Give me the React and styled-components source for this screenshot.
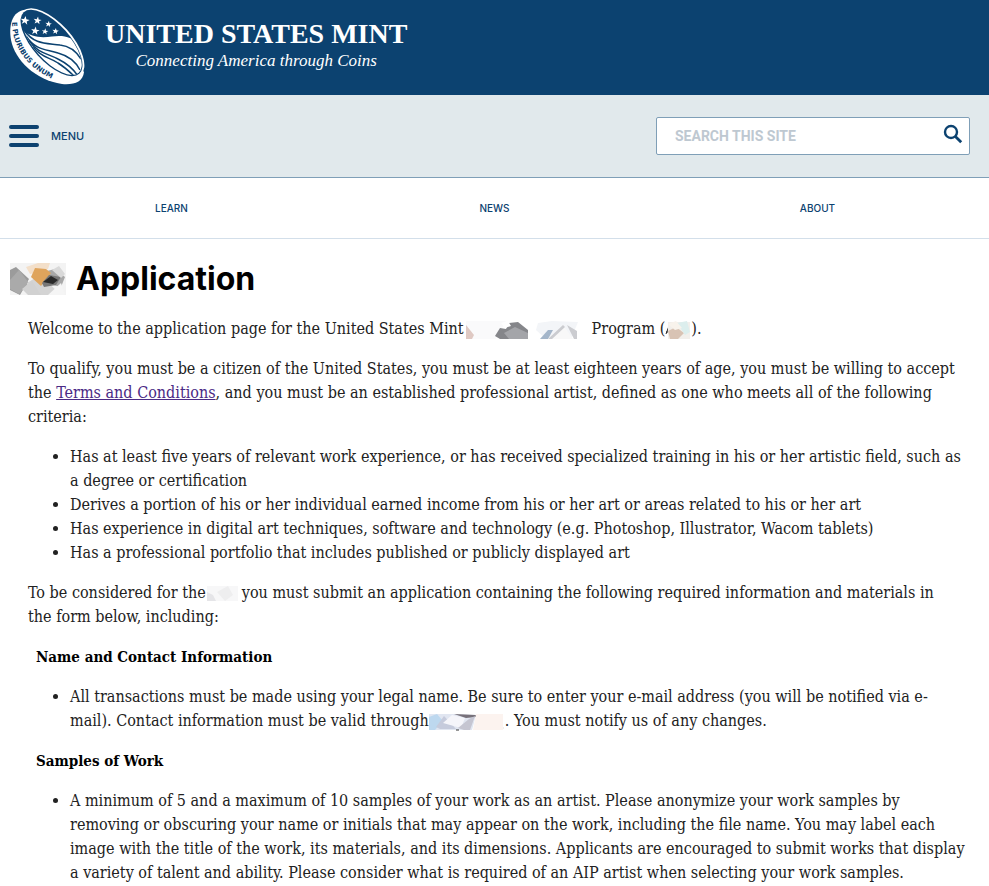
import React from "react";
import styled, { createGlobalStyle } from "styled-components";

const Global = createGlobalStyle`
  * { box-sizing: border-box; }
  body { margin: 0; background: #fff; color: #222; }
`;

const navy = "#0c4270";
const sans = `"Inter", "Open Sans", sans-serif`;
const serif = `"Liberation Serif", serif`;
const slab = `"DejaVu Serif Condensed", "DejaVu Serif", serif`;

const Masthead = styled.header`
  height: 95px;
  padding: 8px 8px 0;
  background: ${navy};
  color: #fff;
`;
const Brand = styled.a`
  display: inline-flex;
  gap: 20px;
  color: inherit;
  text-decoration: none;
`;
const Wordmark = styled.span`
  display: flex;
  flex-direction: column;
  align-items: center;
  padding-top: 10px;
  font-family: ${serif};
  white-space: nowrap;
`;
const BrandName = styled.span`
  font-size: 28px;
  font-weight: 700;
  line-height: 32px;
`;
const Tagline = styled.span`
  font-size: 17px;
  font-style: italic;
  line-height: 22px;
`;
const Toolbar = styled.div`
  display: flex;
  align-items: center;
  justify-content: space-between;
  height: 83px;
  padding: 0 19px 0 9px;
  background: #e1e9ec;
  border-bottom: 1px solid #7f9fb7;
`;
const MenuButton = styled.button`
  display: flex;
  align-items: center;
  gap: 12px;
  padding: 0;
  border: 0;
  background: none;
  color: ${navy};
  font: 500 11px/16px ${sans};
`;
const Search = styled.form`
  display: flex;
  align-items: center;
  width: 314px;
  height: 38px;
  padding: 0 6px 0 18px;
  background: #fff;
  border: 1px solid #7f9fb7;
  border-radius: 2px;
`;
const SearchInput = styled.input`
  flex: 1;
  min-width: 0;
  padding: 0;
  border: 0;
  outline: 0;
  background: none;
  font: 700 14px/18px "Roboto", sans-serif;
  color: ${navy};
  &::placeholder { color: #bec8d1; opacity: 1; }
`;
const SearchButton = styled.button`
  display: flex;
  padding: 0 0 4px;
  border: 0;
  background: none;
`;
const Nav = styled.nav`
  display: grid;
  grid-template-columns: repeat(3, 1fr);
  align-items: center;
  justify-items: center;
  height: 61px;
  padding: 0 10px;
  border-bottom: 1px solid #d3dfea;
`;
const NavLink = styled.a`
  font: 500 10px/16px ${sans};
  color: ${navy};
  text-decoration: none;
`;
const Main = styled.main`
  padding: 20px 10px 0;
`;
const Title = styled.h1`
  display: flex;
  align-items: center;
  gap: 8px;
  margin: 0 0 18px;
  font: 700 32px/40px ${sans};
  color: #000;
`;
const Body = styled.div`
  padding: 0 14px 0 18px;
  font: 16px/24px ${slab};
`;
const Paragraph = styled.p`
  margin: 0 0 16px;
`;
const TermsLink = styled.a`
  color: #4b2a85;
`;
const SectionTitle = styled.h2`
  margin: 0 0 16px 8px;
  font: 700 15px/24px ${slab};
  color: #000;
`;
const List = styled.ul`
  margin: 0 0 16px;
  padding: 0 0 0 42px;
  &:last-child { margin-bottom: 0; }
`;
const Patch = styled.svg`
  display: ${(p) => (p.$block ? "block" : "inline-block")};
  vertical-align: -5px;
`;

const star = "M0-5 1.3-1.5 5-1.4 2.1.8 3.1 4.2 0 2.1-3.1 4.2-2.1.8-5-1.4-1.3-1.5Z";
const stars = [
  [25, 20.5, 0.9], [37.5, 20.5, 0.8], [48.5, 24, 0.65],
  [35.2, 30.8, 0.85], [45, 31.5, 0.65], [55.5, 31.2, 0.65],
];

function Coin() {
  return (
    <svg width="77" height="78" viewBox="8 8 77 78" aria-hidden="true">
      <defs>
        <clipPath id="face">
          <ellipse cx="52" cy="43" rx="17.5" ry="40" transform="rotate(-42 52 43)" />
        </clipPath>
        <path id="rim" d="M12 22C12 45 26 70 60 82" />
      </defs>
      <path d="M27 9.5C14 10 8 22 11 40c4 20 24 40 51 44 12 1 21-2 22-12Z" fill="#fff" />
      <ellipse cx="52" cy="43" rx="20" ry="43" transform="rotate(-42 52 43)" fill="#fff" />
      <ellipse cx="51.5" cy="43" rx="18.5" ry="41.5" transform="rotate(-42 51.5 43)" fill={navy} />
      {stars.map(([x, y, s]) => (
        <path key={x} d={star} fill="#fff" transform={`translate(${x} ${y}) rotate(8) scale(${s})`} />
      ))}
      <g clipPath="url(#face)">
        <path d="M20 28C30 38 42 38 52 36.500 62 35 72 36 82 46V84H20Z" fill="#fff" />
        <g fill="none" stroke={navy} strokeWidth="1.5">
          <path d="M24 30C34 45 47 43 60 45c10 1 16 6 21 14" />
          <path d="M26 36C36 51 46 49 58 53c11 3 18 9 22 17" />
          <path d="M29 41C39 54 47 53 58 59c10 5 16 11 20 17" />
          <path d="M33 47C42 58 49 57 58 63c8 5 13 10 17 14" />
        </g>
      </g>
      <text fontFamily="DejaVu Sans" fontSize="7" fontWeight="700" fill={navy}>
        <textPath href="#rim">E PLURIBUS UNUM</textPath>
      </text>
    </svg>
  );
}

function TitlePatch() {
  return (
    <Patch $block width="58" height="32" viewBox="0 0 58 32" aria-hidden="true">
      <rect width="56" height="32" fill="#f3f3f3" />
      <path d="M0 7 6 4l13 12-9 16-10-5Z" fill="#9b9b9b" />
      <path d="m0 17 9-10 10 13-10 11-9-5Z" fill="#aaa" />
      <path d="m16 4 12-4h12l-2 6-18 5Z" fill="#f3dfc9" />
      <path d="m17 20 13-8 19 18-4 2H18Z" fill="#d4d4d4" />
      <path d="m37 8 8-2 10 8-4 10-12-3Z" fill="#a8a8a8" />
      <path d="m25 5 11 1 5 4-10 13-10-9Z" fill="#dfa45c" />
      <path d="m32 20 7-8 12 2-5 8-12 2Z" fill="#777" />
      <path d="m33 19 8-6 7 4-5 4Z" fill="#292929" />
      <path d="m42 7 7-4 6 8-4 4Z" fill="#d9d9d9" />
      <path d="m12 26 10-8 9 14H18Z" fill="#d1d1d1" />
      <path d="m38 32 13-12 4 12Z" fill="#f5f5f5" />
    </Patch>
  );
}

function ProgramPatch() {
  return (
    <Patch width="128" height="18" viewBox="0 0 128 18" aria-hidden="true">
      <path d="M2 0h40l-10 18H2Z" fill="#fafafb" />
      <path d="m2 4 8 10-2 4H2Z" fill="#dfc9c3" />
      <path d="m31 15 5-8 6 1 3-6 9-1 10 8v9H36Z" fill="#85868a" />
      <path d="m40 12 11-6 13 6v6H45Z" fill="#a4a5a9" />
      <path d="m37 2 7-2 3 5-6 2Z" fill="#fff" />
      <path d="m74 2 14-2 26 1-7 17H82L72 9Z" fill="#f3f5f8" />
      <path d="m76 18 8-9h5l-5 9Z" fill="#a4b6ca" />
      <path d="m84 18 15-14 10 14Z" fill="#f8f8f8" />
      <path d="m84 18 15-14 2 2-13 12Zm19-14 10 6v8h-3Z" fill="#cbccd0" />
    </Patch>
  );
}

function AcronymPatch() {
  return (
    <Patch width="26" height="18" viewBox="0 0 26 18" aria-hidden="true">
      <path d="m1 13 3-8M1 11h3" stroke="#222" fill="none" />
      <path d="M3 1h22v17H3Z" fill="#f2efeb" />
      <path d="m3 10 8-4 8 6-6 6H5Z" fill="#d8c3b4" />
      <path d="m12 2 10-2 3 11-5 3Z" fill="#dceeed" />
      <path d="m3 3 8-3 6 7-7 2Z" fill="#f8f3ec" />
    </Patch>
  );
}

function ReferencePatch() {
  return (
    <Patch width="36" height="18" viewBox="0 0 36 18" aria-hidden="true">
      <path d="M1 1h31v15H1Z" fill="#f7f7f8" />
      <path d="m1 7 6 3 3 6H1Z" fill="#e5e5e8" />
      <path d="m11 7 11-6 5 9-8 6Z" fill="#eeeeef" />
    </Patch>
  );
}

function DatePatch() {
  return (
    <Patch width="76" height="18" viewBox="0 0 76 18" aria-hidden="true">
      <path d="M0 1h24l23 1-4 15H0Z" fill="#e1e6f1" />
      <path d="M0 4 8 1l6 7-8 9H0Z" fill="#bdd8ef" />
      <path d="m7 14 8-11 12 13H11Z" fill="#c6cbdc" />
      <path d="m14 10 9-8 13 3-4 10Z" fill="#f5f5fa" />
      <path d="m25 1 22 1v2l-10 1Z" fill="#77717a" />
      <path d="m29 15 11-9 6-3-5 14h-6Z" fill="#c5c5d1" />
      <path d="M47 1h27v16H44Z" fill="#fcf3ef" />
      <path d="M74 15h1" stroke="#ddd" />
      <path d="M27 17h3" stroke="#333" />
    </Patch>
  );
}

export default function App() {
  return (
    <>
      <Global />
      <Masthead>
        <Brand href="#home">
          <Coin />
          <Wordmark>
            <BrandName>UNITED STATES MINT</BrandName>
            <Tagline>Connecting America through Coins</Tagline>
          </Wordmark>
        </Brand>
      </Masthead>
      <Toolbar>
        <MenuButton type="button">
          <svg width="30" height="22" viewBox="0 0 30 22" fill={navy} aria-hidden="true">
            <rect width="30" height="4" rx="2" />
            <rect y="9" width="30" height="4" rx="2" />
            <rect y="18" width="30" height="4" rx="2" />
          </svg>
          MENU
        </MenuButton>
        <Search role="search">
          <SearchInput type="search" aria-label="Search this site" placeholder="SEARCH THIS SITE" />
          <SearchButton type="button" aria-label="Search">
            <svg width="20" height="20" viewBox="0 0 20 20" fill="none" stroke={navy} aria-hidden="true">
              <circle cx="8" cy="8" r="6" strokeWidth="2.4" />
              <path d="m12.4 12.4 5.8 5.8" strokeWidth="2.8" />
            </svg>
          </SearchButton>
        </Search>
      </Toolbar>
      <Nav>
        <NavLink href="#learn">LEARN</NavLink>
        <NavLink href="#news">NEWS</NavLink>
        <NavLink href="#about">ABOUT</NavLink>
      </Nav>
      <Main>
        <Title><TitlePatch />Application</Title>
        <Body>
          <Paragraph>
            Welcome to the application page for the United States Mint<ProgramPatch />Program (<AcronymPatch />).
          </Paragraph>
          <Paragraph>
            To qualify, you must be a citizen of the United States, you must be at least eighteen years of age, you must be willing to accept
            the <TermsLink href="#terms">Terms and Conditions</TermsLink>, and you must be an established professional artist, defined as one who meets all of the following
            criteria:
          </Paragraph>
          <List>
            <li>Has at least five years of relevant work experience, or has received specialized training in his or her artistic field, such as a&nbsp;degree or certification</li>
            <li>Derives a portion of his or her individual earned income from his or her art or areas related to his or her art</li>
            <li>Has experience in digital art techniques, software and technology (e.g. Photoshop, Illustrator, Wacom tablets)</li>
            <li>Has a professional portfolio that includes published or publicly displayed art</li>
          </List>
          <Paragraph>
            To be considered for the<ReferencePatch />you must submit an application containing the following required information and materials in
            the&nbsp;form below, including:
          </Paragraph>
          <SectionTitle>Name and Contact Information</SectionTitle>
          <List>
            <li>
              All transactions must be made using your legal name. Be sure to enter your e-mail address (you will be notified via e-mail).
              Contact information must be valid through<DatePatch />. You must notify us of any changes.
            </li>
          </List>
          <SectionTitle>Samples of Work</SectionTitle>
          <List>
            <li>
              A minimum of 5 and a maximum of 10 samples of your work as an artist. Please anonymize your work samples by
              removing or obscuring your name or initials that may appear on the work, including the file name. You may label each
              image with the title of the work, its materials, and its dimensions. Applicants are encouraged to submit works that display
              a&nbsp;variety of talent and ability. Please consider what is required of an AIP artist when selecting your work samples.
            </li>
          </List>
        </Body>
      </Main>
    </>
  );
}
